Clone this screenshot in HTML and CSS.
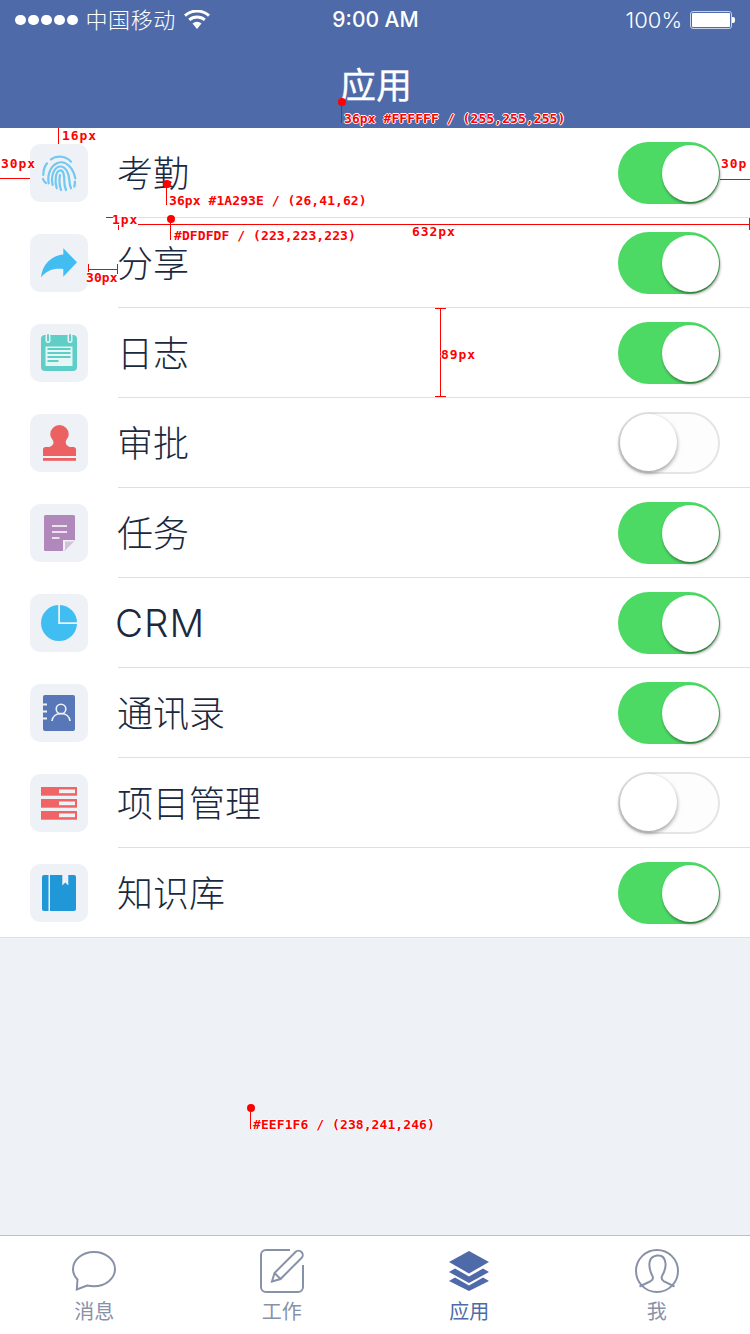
FILE: index.html
```html
<!DOCTYPE html>
<html lang="zh">
<head>
<meta charset="utf-8">
<title>应用</title>
<link rel="stylesheet" href="styles.css">
</head>
<body>
<div class="page">
  <header class="header">
    <div class="status">
      <div class="status-left">
        <span class="dots"><i></i><i></i><i></i><i></i><i></i></span>
        <span class="carrier">中国移动</span>
        <svg class="wifi" viewBox="0 0 26 20"><path d="M13 19l-4.500-5.500a6.500 6.500 0 0 1 9 0z" fill="#fff"/><path d="M5.200 9.800a12 12 0 0 1 15.600 0" fill="none" stroke="#fff" stroke-width="3"/><path d="M1 5.600a18 18 0 0 1 24 0" fill="none" stroke="#fff" stroke-width="3"/></svg>
      </div>
      <div class="time">9:00 AM</div>
      <div class="status-right">
        <span class="percent">100%</span>
        <span class="battery"><span class="battery-fill"></span></span><span class="battery-cap"></span>
      </div>
    </div>
    <h1 class="title">应用</h1>
  </header>

  <main class="main">
    <ul class="list">
      <li class="row">
        <span class="tile"><svg class="glyph" viewBox="0 0 58 58" fill="none" stroke="#72c8f0" stroke-width="2.200" stroke-linecap="round">
          <path d="M21 15.300C27 11 36 12 41 17.700"/>
          <path d="M17 19.300C14.500 22.500 13.300 27 13.300 31"/>
          <path d="M13 35c.5 1.500 1.500 3 3 4"/>
          <path d="M18.700 39.300C17 30 21 20.500 29.300 18.500 36 17 43 23.500 45.300 34.300"/>
          <path d="M22.700 41C20.500 32 24 23 30 22.500 36 22 39 30 39.300 36 39.500 39 40 42 41 44.300"/>
          <path d="M26.700 44.300C24.500 37 25.500 27 30 26.500 34 26 34.300 33 34.300 37 34.300 40.500 35 43.500 36 46"/>
          <path d="M31 46C29.500 41.500 29 36 30 31"/>
          <path d="M45 37.700c0 1.700-.2 3.400-.7 5"/>
        </svg></span>
        <div class="row-body"><span class="label">考勤</span><span class="switch on"><span class="knob"></span></span></div>
      </li>
      <li class="row">
        <span class="tile"><svg class="glyph" viewBox="0 0 58 58"><path d="M11 43.500C12 31 21 21.500 33.300 20.500V14.300L47 28.300 33.300 42.700V35C24 34 17 36 11 43.500Z" fill="#42bdf2"/></svg></span>
        <div class="row-body"><span class="label">分享</span><span class="switch on"><span class="knob"></span></span></div>
      </li>
      <li class="row">
        <span class="tile"><svg class="glyph" viewBox="0 0 58 58">
          <path d="M15 11h28a4 4 0 0 1 4 4v28a4 4 0 0 1-4 4H15a4 4 0 0 1-4-4V15a4 4 0 0 1 4-4z" fill="#5fcec6"/>
          <rect x="15.500" y="10" width="5" height="9" rx="2.500" fill="#eef1f6"/><rect x="37.500" y="10" width="5" height="9" rx="2.500" fill="#eef1f6"/>
          <rect x="17" y="10" width="2" height="7.500" rx="1" fill="#5fcec6"/><rect x="39" y="10" width="2" height="7.500" rx="1" fill="#5fcec6"/>
          <rect x="15.500" y="22.500" width="27" height="19.500" fill="#e6f5f6"/>
          <path d="M17.500 25h23M17.500 29h23M17.500 33h23M17.500 37h11" stroke="#5fcec6" stroke-width="1.800"/>
        </svg></span>
        <div class="row-body"><span class="label">日志</span><span class="switch on"><span class="knob"></span></span></div>
      </li>
      <li class="row">
        <span class="tile"><svg class="glyph" viewBox="0 0 58 58">
          <path d="M29.500 11a9.200 9.200 0 0 1 9.200 9.200c0 3.500-3 5.500-3 8.300 0 2 2 4 4 4.500h3.800c1.500 0 2.500 1 2.500 2.500V42H13v-6.500c0-1.500 1-2.500 2.500-2.500h4c2-.5 4-2.500 4-4.500 0-2.800-3.200-4.800-3.200-8.300a9.200 9.200 0 0 1 9.200-9.200z" fill="#ec6263"/>
          <rect x="13" y="44" width="33" height="2.800" fill="#ec6263"/>
        </svg></span>
        <div class="row-body"><span class="label">审批</span><span class="switch off"><span class="knob"></span></span></div>
      </li>
      <li class="row">
        <span class="tile"><svg class="glyph" viewBox="0 0 58 58">
          <path d="M15.500 11h28a1.500 1.500 0 0 1 1.500 1.500V36L34 47H15.500a1.500 1.500 0 0 1-1.500-1.500v-33a1.500 1.500 0 0 1 1.500-1.500z" fill="#b088bc"/>
          <path d="M33 36h12L33 48z" fill="#eef1f6"/>
          <path d="M35 37.500h9l-9 9z" fill="#d5bfdc"/>
          <path d="M22 22h15M22 28h15M22 34h7.500" stroke="#fff" stroke-width="1.700"/>
        </svg></span>
        <div class="row-body"><span class="label">任务</span><span class="switch on"><span class="knob"></span></span></div>
      </li>
      <li class="row">
        <span class="tile"><svg class="glyph" viewBox="0 0 58 58">
          <path d="M28.200 13.600V30H47a18 18 0 1 1-18.800-18.900z" fill="#40bef2"/>
          <path d="M30 11a18 18 0 0 1 17 17.200H30z" fill="#40bef2"/>
        </svg></span>
        <div class="row-body"><span class="label label-latin">CRM</span><span class="switch on"><span class="knob"></span></span></div>
      </li>
      <li class="row">
        <span class="tile"><svg class="glyph" viewBox="0 0 58 58">
          <rect x="13" y="11" width="32" height="36" rx="2" fill="#5877b8"/>
          <path d="M13 20.500h4M13 27.500h4M13 34.500h4" stroke="#eef1f6" stroke-width="2"/>
          <g fill="none" stroke="#eef1f6" stroke-width="1.600"><circle cx="31" cy="25" r="4.800"/><path d="M22 37c.5-4.500 4-7.500 9-7.500s8.500 3 9 7.500"/></g>
        </svg></span>
        <div class="row-body"><span class="label">通讯录</span><span class="switch on"><span class="knob"></span></span></div>
      </li>
      <li class="row">
        <span class="tile"><svg class="glyph" viewBox="0 0 58 58">
          <g fill="#f06466"><rect x="11" y="13" width="36" height="8.700"/><rect x="11" y="25" width="36" height="8.700"/><rect x="11" y="37" width="36" height="8.700"/></g>
          <g fill="#eef1f6"><rect x="29" y="15.500" width="16" height="3.700"/><rect x="29" y="27.500" width="16" height="3.700"/><rect x="29" y="39.500" width="16" height="3.700"/></g>
        </svg></span>
        <div class="row-body"><span class="label">项目管理</span><span class="switch off"><span class="knob"></span></span></div>
      </li>
      <li class="row row-last">
        <span class="tile"><svg class="glyph" viewBox="0 0 58 58">
          <path d="M14 11h4.500v36H14a2 2 0 0 1-2-2V13a2 2 0 0 1 2-2z" fill="#2097d6"/>
          <path d="M20 11h12.300v10.500l3-3 3 3V11H44a2 2 0 0 1 2 2v32a2 2 0 0 1-2 2H20z" fill="#2097d6"/>
        </svg></span>
        <div class="row-body"><span class="label">知识库</span><span class="switch on"><span class="knob"></span></span></div>
      </li>
    </ul>
  </main>

  <nav class="tabbar">
    <a class="tab">
      <svg class="tab-icon" viewBox="0 0 44 44" fill="none" stroke="#8791a8" stroke-width="2"><path d="M15 36.600c2.200.4 4.500.6 7 .6C33.600 37.200 43 29.500 43 20S33.600 3 22 3 1 10.500 1 20c0 4.500 1.800 7.800 4.500 10.500L4.800 40.500z"/></svg>
      <span class="tab-label">消息</span>
    </a>
    <a class="tab">
      <svg class="tab-icon" viewBox="0 0 44 44" fill="none" stroke="#8791a8" stroke-width="2"><path d="M30 1H6a5 5 0 0 0-5 5v32a5 5 0 0 0 5 5h32a5 5 0 0 0 5-5V16"/><path d="M12 32.500l2.500-8.500L35.500 3a4 4 0 0 1 6 6L20.500 30zM14.500 24l6 6"/></svg>
      <span class="tab-label">工作</span>
    </a>
    <a class="tab tab-active">
      <svg class="tab-icon" viewBox="0 0 44 44" fill="#4e6aa9"><path d="M22 2l20 11-20 11.500L2 13z"/><path d="M8 19.500L22 27.500l14-8 6 3.500-20 11L2 23z"/><path d="M8 28.500L22 36.500l14-8 6 3.500-20 10-20-10z"/></svg>
      <span class="tab-label">应用</span>
    </a>
    <a class="tab">
      <svg class="tab-icon" viewBox="0 0 44 44" fill="none" stroke="#8791a8" stroke-width="2"><circle cx="22" cy="22" r="21"/><path d="M4.500 37.500L15 32.500C18.500 30.500 18.500 28.500 17 26 15 22 14 18 14.500 14 15 9 18 7 22 6.500 27 6 30 9 30.500 14 31 18 29.500 22.500 27.500 26 26 28.500 26 30.500 29 32.500L39.500 37.500"/></svg>
      <span class="tab-label">我</span>
    </a>
  </nav>

  <div class="marks">
    <i class="m v m-a1"></i><b class="t short t-a1">16px</b>
    <i class="m h m-b1"></i><b class="t short t-b1">30px</b>
    <i class="dot d-c"></i><i class="m v m-c1"></i><b class="t t-c1">36px #FFFFFF / (255,255,255)</b>
    <i class="dot d-d"></i><i class="m v m-d1"></i><b class="t t-d1">36px #1A293E / (26,41,62)</b>
    <i class="m h m-e1"></i><i class="m v m-e2"></i><b class="t short t-e1">1px</b>
    <i class="m h m-f1"></i><i class="m v m-f2"></i><i class="dot d-f"></i><i class="m v m-f3"></i><b class="t t-f1">#DFDFDF / (223,223,223)</b><b class="t short t-f2">632px</b>
    <i class="m h m-g1"></i><b class="t short t-g1">30p</b>
    <i class="m h m-h1"></i><i class="m v m-h2"></i><i class="m v m-h3"></i><b class="t t-h1">30px</b>
    <i class="m v m-j1"></i><i class="m h m-j2"></i><i class="m h m-j3"></i><b class="t short t-j1">89px</b>
    <i class="dot d-k"></i><i class="m v m-k1"></i><b class="t t-k1">#EEF1F6 / (238,241,246)</b>
  </div>
</div>
</body>
</html>
```

FILE: styles.css
```css
* { box-sizing: border-box; }
html, body { margin: 0; padding: 0; }
body { font-family: "Noto Sans CJK SC", "Noto Sans", sans-serif; color: #1a293e; background: #eef1f6; }
.page { position: relative; width: 750px; height: 1334px; overflow: hidden; display: flex; flex-direction: column; }

.header { height: 128px; background: #4e6aa9; color: #fff; flex: none; }
.status { height: 40px; display: grid; grid-template-columns: 1fr auto 1fr; align-items: center; }
.status-left { display: flex; align-items: center; padding-left: 15px; }
.dots { display: flex; gap: 2.500px; }
.dots i { width: 10.500px; height: 10.500px; border-radius: 50%; background: #fff; }
.carrier { font-size: 22px; font-weight: 300; letter-spacing: .6px; margin-left: 8px; line-height: 36px; height: 40px; }
.wifi { width: 26px; height: 20px; margin-left: 8px; }
.time { font-family: Inter, "Liberation Sans", sans-serif; font-size: 21px; font-weight: 500; line-height: 40px; padding-left: 1px; }
.status-right { display: flex; align-items: center; justify-content: flex-end; padding-right: 15px; }
.percent { font-family: Inter, "Liberation Sans", sans-serif; font-size: 22px; font-weight: 300; margin-right: 8px; line-height: 40px; }
.battery { width: 42px; height: 18px; border: 1px solid #c8d2e8; border-radius: 3px; padding: 1px; display: block; }
.battery-fill { display: block; height: 100%; background: #fff; border-radius: 1px; }
.battery-cap { width: 3px; height: 6px; background: #fff; border-radius: 0 2px 2px 0; }
.title { margin: 0; height: 88px; font-size: 36px; font-weight: 400; line-height: 86px; text-align: center; padding-left: 2px; -webkit-text-stroke: .3px #fff; }

.main { flex: 1; }
.list { list-style: none; margin: 0; padding: 0; background: #fff; border-bottom: 1px solid #dfdfdf; }
.row { display: flex; height: 90px; padding-left: 30px; }
.row-last { height: 89px; }
.tile { width: 58px; height: 58px; margin-top: 16px; border-radius: 10px; background: #eef1f6; flex: none; }
.glyph { display: block; width: 58px; height: 58px; }
.row-body { flex: 1; margin-left: 30px; padding-right: 30px; display: flex; align-items: center; justify-content: space-between; border-bottom: 1px solid #dfdfdf; height: 90px; }
.row-last .row-body { border-bottom: 0; height: 89px; }
.label { font-size: 36px; font-weight: 300; line-height: 86px; height: 90px; margin-left: -1px; }
.label-latin { font-family: Inter, sans-serif; font-size: 38.500px; letter-spacing: 1px; margin-left: -3px; line-height: 90px; }

.switch { position: relative; display: block; width: 102px; height: 62px; margin-top: 1px; border-radius: 31px; }
.switch.on { background: #4cd964; }
.switch.off { background: #fdfdfd; border: 2px solid #e5e5e5; }
.knob { position: absolute; width: 57px; height: 57px; border-radius: 50%; background: #fff; }
.on .knob { left: 44px; top: 2.500px; box-shadow: 1px 2px 3px rgba(0, 0, 0, .45); }
.off .knob { left: 0; top: 0; box-shadow: 0 2px 4px rgba(0, 0, 0, .4); }

.tabbar { height: 99px; flex: none; display: grid; grid-template-columns: repeat(4, 1fr); background: #fff; border-top: 1px solid #bcbdd0; }
.tab { display: flex; flex-direction: column; align-items: center; padding: 13px 0 0 1px; color: #8791a8; }
.tab-active { color: #4e6aa9; }
.tab-icon { display: block; width: 44px; height: 44px; }
.tab-label { font-size: 20px; line-height: 28px; margin-top: 4px; }

.marks { position: absolute; left: 0; top: 0; width: 750px; height: 1334px; pointer-events: none; }
.marks .m { position: absolute; background: #f00; }
.marks .v { width: 1px; }
.marks .h { height: 1px; }
.dot { position: absolute; width: 8px; height: 8px; border-radius: 50%; background: #f00; }
.t { position: absolute; font-family: "DejaVu Sans Mono", "Liberation Mono", monospace; font-size: 13px; line-height: 16px; font-weight: 700; letter-spacing: .08px; color: #f00; white-space: nowrap; text-shadow: 1px 0 0 #fff, -1px 0 0 #fff, 0 1px 0 #fff, 0 -1px 0 #fff; }
.short { letter-spacing: .9px; }

.m-a1 { left: 58px; top: 128px; height: 16px; }
.t-a1 { left: 62px; top: 128px; }
.m-b1 { left: 0; top: 178px; width: 30px; }
.t-b1 { left: 1px; top: 156px; }
.d-c { left: 338px; top: 98px; }
.m-c1 { left: 341px; top: 104px; height: 19px; }
.t-c1 { left: 344px; top: 111px; }
.d-d { left: 163px; top: 180px; }
.m-d1 { left: 166px; top: 186px; height: 19px; }
.t-d1 { left: 169px; top: 193px; }
.m-e1 { left: 106px; top: 217px; width: 12px; }
.m-e2 { left: 118px; top: 225px; height: 5px; }
.t-e1 { left: 112px; top: 212px; }
.m-f1 { left: 138px; top: 224px; width: 612px; }
.m-f2 { left: 749px; top: 218px; height: 12px; }
.d-f { left: 167px; top: 215px; }
.m-f3 { left: 170px; top: 221px; height: 19px; }
.t-f1 { left: 174px; top: 228px; }
.t-f2 { left: 412px; top: 224px; }
.m-g1 { left: 720px; top: 179px; width: 30px; }
.t-g1 { left: 721px; top: 156px; }
.m-h1 { left: 88px; top: 269px; width: 30px; }
.m-h2 { left: 88px; top: 264px; height: 10px; }
.m-h3 { left: 117px; top: 264px; height: 10px; }
.t-h1 { left: 86px; top: 270px; }
.m-j1 { left: 440px; top: 308px; height: 89px; }
.m-j2 { left: 435px; top: 308px; width: 11px; }
.m-j3 { left: 435px; top: 396px; width: 11px; }
.t-j1 { left: 441px; top: 347px; }
.d-k { left: 247px; top: 1104px; }
.m-k1 { left: 250px; top: 1110px; height: 19px; }
.t-k1 { left: 253px; top: 1117px; }
```
